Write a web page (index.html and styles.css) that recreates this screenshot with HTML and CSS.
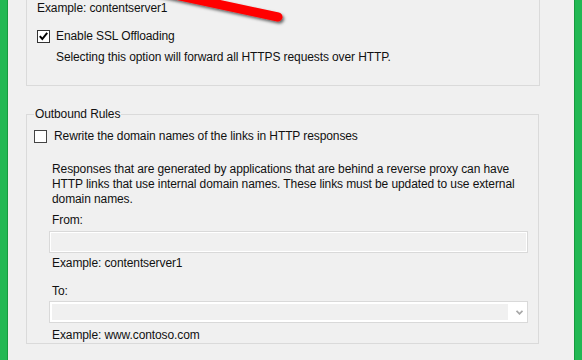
FILE: index.html
```html
<!DOCTYPE html>
<html>
<head>
  <meta charset="UTF-8">
  <title>Reverse Proxy Rules</title>
  <link rel="stylesheet" href="styles.css">
</head>
<body>
  <div class="window">
    <div class="edge edge-left"></div>

    <div class="panel">
      <div class="group-inbound">
        <div class="hint">Example: contentserver1</div>
        <div class="check-row">
          <span class="check checked">
            <svg width="11" height="11" viewBox="0 0 11 11"><polyline points="1.8,5.2 4.3,8 9.2,1.8" fill="none" stroke="#000" stroke-width="2"/></svg>
          </span>
          <span>Enable SSL Offloading</span>
        </div>
        <div class="desc">Selecting this option will forward all HTTPS requests over HTTP.</div>
      </div>

      <fieldset class="group-outbound">
        <legend>Outbound Rules</legend>
        <div class="check-row rewrite">
          <span class="check"></span>
          <span>Rewrite the domain names of the links in HTTP responses</span>
        </div>

        <div class="rule-body">
          <div class="note">Responses that are generated by applications that are behind a reverse proxy can have HTTP links that use internal domain names. These links must be updated to use external domain names.</div>

          <div class="field-label">From:</div>
          <div class="textbox"></div>
          <div class="example">Example: contentserver1</div>

          <div class="field-label to-label">To:</div>
          <div class="combo">
            <div class="combo-field"></div>
            <div class="combo-arrow">
              <svg width="7" height="5" viewBox="0 0 7 5"><polyline points="0.5,0.8 3.5,3.8 6.5,0.8" fill="none" stroke="#a8a8a8" stroke-width="1.8"/></svg>
            </div>
          </div>
          <div class="example last">Example: www.contoso.com</div>
        </div>
      </fieldset>
    </div>

    <div class="edge edge-right"></div>

    <!-- red callout stroke drawn over the dialog -->
    <svg class="callout" width="582" height="60" viewBox="0 0 582 60">
      <defs>
        <filter id="shade" x="-20%" y="-50%" width="140%" height="200%">
          <feDropShadow dx="1.5" dy="2" stdDeviation="1.5" flood-color="#000" flood-opacity="0.6"/>
        </filter>
      </defs>
      <line x1="150" y1="-10.5" x2="278" y2="17" stroke="#f00" stroke-width="9" stroke-linecap="round" filter="url(#shade)"/>
    </svg>
  </div>
</body>
</html>
```

FILE: styles.css
```css
body {
  margin: 0;
  background: #f0f0f0;
  font-family: "Liberation Sans", Arial, sans-serif;
  font-size: 12px;
  letter-spacing: -0.1px;
  color: #111;
}

.window {
  display: flex;
  height: 360px;
  position: relative;
  overflow: hidden;
}

.edge {
  width: 7px;
  background: #22b853;
}

.edge-left {
  border-right: 1px solid #179a3f;
}

.edge-right {
  border-left: 1px solid #179a3f;
}

.panel {
  flex: 1;
  padding-left: 18px;
}

/* top group, its header is scrolled out of view */
.group-inbound {
  width: 514px;
  height: 86px;
  box-sizing: border-box;
  border: 1px solid #dadada;
  border-top: none;
  padding-left: 10px;
}

.hint {
  line-height: 16px;
}

.check-row {
  display: flex;
  align-items: center;
  margin-top: 12px;
  line-height: 16px;
}

.check {
  width: 13px;
  height: 13px;
  box-sizing: border-box;
  border: 1px solid #333;
  background: #fff;
  margin-right: 6px;
  display: flex;
  align-items: center;
  justify-content: center;
}

.desc {
  margin: 5px 0 0 19px;
  line-height: 16px;
}

.group-outbound {
  width: 513px;
  box-sizing: border-box;
  margin: 20px 0 0;
  padding: 6px 0 0 7px;
  border: 1px solid #dadada;
  min-width: 0;
}

.group-outbound legend {
  padding: 0 1px;
  line-height: 16px;
}

.check-row.rewrite {
  margin-top: 0;
}

.check-row.rewrite .check {
  border-color: #444;
  margin-right: 7px;
}

.rule-body {
  margin-left: 15px;
  width: 479px;
}

.note {
  padding-left: 3px;
  margin-top: 18px;
  line-height: 15px;
}

.field-label {
  padding-left: 3px;
  margin-top: 5px;
  line-height: 16px;
}

.field-label.to-label {
  margin-top: 12px;
}

.textbox {
  margin-top: 3px;
  height: 22px;
  box-sizing: border-box;
  border: 1px solid #d9d9d9;
  box-shadow: inset 0 0 0 1px #fff;
}

.example {
  padding-left: 3px;
  margin-top: 2px;
  line-height: 16px;
}

.example.last {
  margin-top: 4px;
}

.combo {
  display: flex;
  margin-top: 2px;
  height: 22px;
  box-sizing: border-box;
  border: 1px solid #d9d9d9;
  background: #fff;
  padding: 2px;
}

.combo-field {
  flex: 1;
  background: #f0f0f0;
}

.combo-arrow {
  width: 17px;
  display: flex;
  align-items: center;
  padding-left: 8px;
  box-sizing: border-box;
}

.callout {
  position: absolute;
  top: 0;
  left: 0;
  pointer-events: none;
}
```
